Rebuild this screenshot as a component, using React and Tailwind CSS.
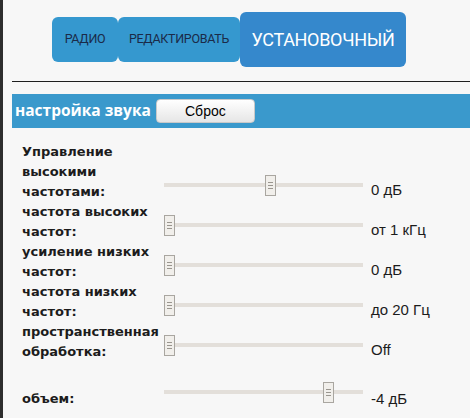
import React from 'react';

const rows = [
  { label: ['Управление', 'высокими', 'частотами:'], value: '0 дБ', pos: 101 },
  { label: ['частота высоких', 'частот:'], value: 'от 1 кГц', pos: 0 },
  { label: ['усиление низких', 'частот:'], value: '0 дБ', pos: 0 },
  { label: ['частота низких', 'частот:'], value: 'до 20 Гц', pos: 0 },
  { label: ['пространственная', 'обработка:'], value: 'Off', pos: 0 },
];

function Slider({ pos }) {
  return (
    <div className="relative h-[21px] w-[199px]">
      <div className="absolute left-0 right-0 top-[8px] h-[4px] bg-[#e3dfda]" />
      <div
        className="absolute top-0 flex h-[21px] w-[11px] flex-col items-center justify-center gap-[2px] border border-[#a9a6a0] bg-[#f1efeb]"
        style={{ left: pos }}
      >
        <span className="block h-px w-[5px] bg-[#9a968f]" />
        <span className="block h-px w-[5px] bg-[#9a968f]" />
        <span className="block h-px w-[5px] bg-[#9a968f]" />
      </div>
    </div>
  );
}

function Row({ label, value, pos, sliderMb = 'mb-[6px]', valueMb = 'mb-[2px]' }) {
  return (
    <div className="flex items-end">
      <div className="w-[161px] pl-[19px] text-[13px] font-bold leading-[20px] text-[#1c1c1c] [font-family:'DejaVu_Sans',sans-serif]">
        {label.map((l) => (
          <div key={l}>{l}</div>
        ))}
      </div>
      <div className={sliderMb}>
        <Slider pos={pos} />
      </div>
      <div className={`${valueMb} pl-[8px] text-[15px] leading-[20px] text-[#1c1c1c] [font-family:'Liberation_Sans',Arial,sans-serif]`}>
        {value}
      </div>
    </div>
  );
}

export default function App() {
  return (
    <div className="flex h-[418px] w-[470px] flex-col overflow-hidden border-l-[3px] border-[#2e2e2e] bg-[#f7f7f7]">
      <div className="flex items-center pl-[49px] pt-[12px] [font-family:Roboto,sans-serif]">
        <div className="flex h-[45px] w-[66px] items-center justify-center rounded-[6px] bg-[#3598cf] text-[12.5px] tracking-[-0.3px] text-[#1b2a48]">
          РАДИО
        </div>
        <div className="flex h-[45px] w-[122px] items-center justify-center rounded-[6px] bg-[#3598cf] text-[12.5px] tracking-[-0.3px] text-[#1b2a48]">
          РЕДАКТИРОВАТЬ
        </div>
        <div className="flex h-[55px] w-[166px] items-center justify-center rounded-[6px] bg-[#3588cc] text-[18px] tracking-[-0.3px] text-white">
          УСТАНОВОЧНЫЙ
        </div>
      </div>

      <div className="ml-[9px] mt-[14px] h-px bg-[#1e1e1e]" />

      <div className="ml-[9px] mt-[12px] flex h-[34px] items-center bg-[#3a99cc] pl-[3px]">
        <span className="text-[15.5px] font-bold text-white [font-family:'Open_Sans',sans-serif]">
          настройка звука
        </span>
        <button className="ml-[5px] h-[24px] w-[99px] rounded-[4px] border border-[#c9c9c9] bg-gradient-to-b from-white to-[#e6e6e6] text-[14px] text-black [font-family:'Liberation_Sans',Arial,sans-serif]">
          Сброс
        </button>
      </div>

      <div className="mt-[14px] flex flex-col">
        {rows.map((r) => (
          <Row key={r.label[0]} {...r} />
        ))}
        <div className="mt-[20px]">
          <Row label={['объем:']} value="-4 дБ" pos={159} sliderMb="mb-[6px]" valueMb="mb-0" />
        </div>
      </div>
    </div>
  );
}
